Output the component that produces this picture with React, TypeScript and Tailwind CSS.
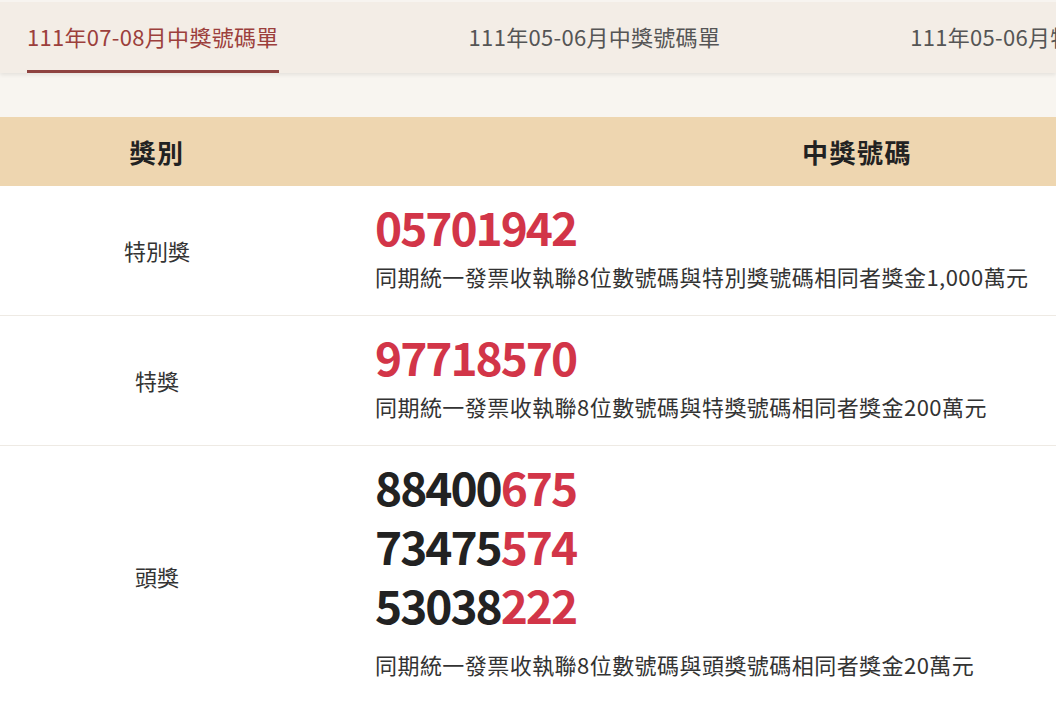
const tabs = [
  { label: "111年07-08月中獎號碼單", active: true },
  { label: "111年05-06月中獎號碼單", active: false },
  { label: "111年05-06月特別獎號碼單", active: false },
];

type Prize = {
  name: string;
  numbers: { plain: string; hit: string }[];
  note: string;
};

const prizes: Prize[] = [
  {
    name: "特別獎",
    numbers: [{ plain: "", hit: "05701942" }],
    note: "同期統一發票收執聯8位數號碼與特別獎號碼相同者獎金1,000萬元",
  },
  {
    name: "特獎",
    numbers: [{ plain: "", hit: "97718570" }],
    note: "同期統一發票收執聯8位數號碼與特獎號碼相同者獎金200萬元",
  },
  {
    name: "頭獎",
    numbers: [
      { plain: "88400", hit: "675" },
      { plain: "73475", hit: "574" },
      { plain: "53038", hit: "222" },
    ],
    note: "同期統一發票收執聯8位數號碼與頭獎號碼相同者獎金20萬元",
  },
];

export default function App() {
  return (
    <div className="w-[1056px] h-[704px] overflow-hidden bg-[#f8f5f0] font-['Noto_Sans_CJK_TC','Noto_Sans',sans-serif] text-[#333]">
      <nav className="relative z-10 h-[73px] bg-[#f3ede6] shadow-[0_2px_4px_rgba(0,0,0,0.08)] border-t-2 border-[#f7f4f0] flex gap-[190px] pl-[27px] whitespace-nowrap">
        {tabs.map((tab) => (
          <div
            key={tab.label}
            className={`h-full flex items-center text-[22px] tracking-[0.3px] border-b-[3px] ${
              tab.active
                ? "text-[#9c3f3c] border-[#8f4340]"
                : "text-[#555] border-transparent"
            }`}
          >
            {tab.label}
          </div>
        ))}
      </nav>

      <div className="mt-[44px] w-[1400px]">
        <div className="h-[69px] bg-[#eed6b0] flex items-center text-[26px] font-bold tracking-[1.5px] text-[#222]">
          <div className="w-[314px] text-center">獎別</div>
          <div className="flex-1 text-center">中獎號碼</div>
        </div>

        <div className="bg-white">
          {prizes.map((prize) => (
            <div
              key={prize.name}
              className="flex border-b border-[#eeeae4]"
            >
              <div className="w-[314px] flex items-center justify-center text-[22px]">
                {prize.name}
              </div>
              <div
                className={`flex-1 pl-[61px] pt-[11px] ${
                  prize.numbers.length > 1 ? "pb-[22px]" : "pb-[19px]"
                }`}
              >
                <div className="text-[46px] font-bold leading-[59px] tracking-[-2px]">
                  {prize.numbers.map((n) => (
                    <div key={n.plain + n.hit}>
                      <span className="text-[#222]">{n.plain}</span>
                      <span className="text-[#d23548]">{n.hit}</span>
                    </div>
                  ))}
                </div>
                <div
                  className={`text-[22px] leading-[40px] tracking-[0.45px] whitespace-nowrap ${
                    prize.numbers.length > 1 ? "mt-[10px]" : ""
                  }`}
                >
                  {prize.note}
                </div>
              </div>
            </div>
          ))}
        </div>
      </div>
    </div>
  );
}
